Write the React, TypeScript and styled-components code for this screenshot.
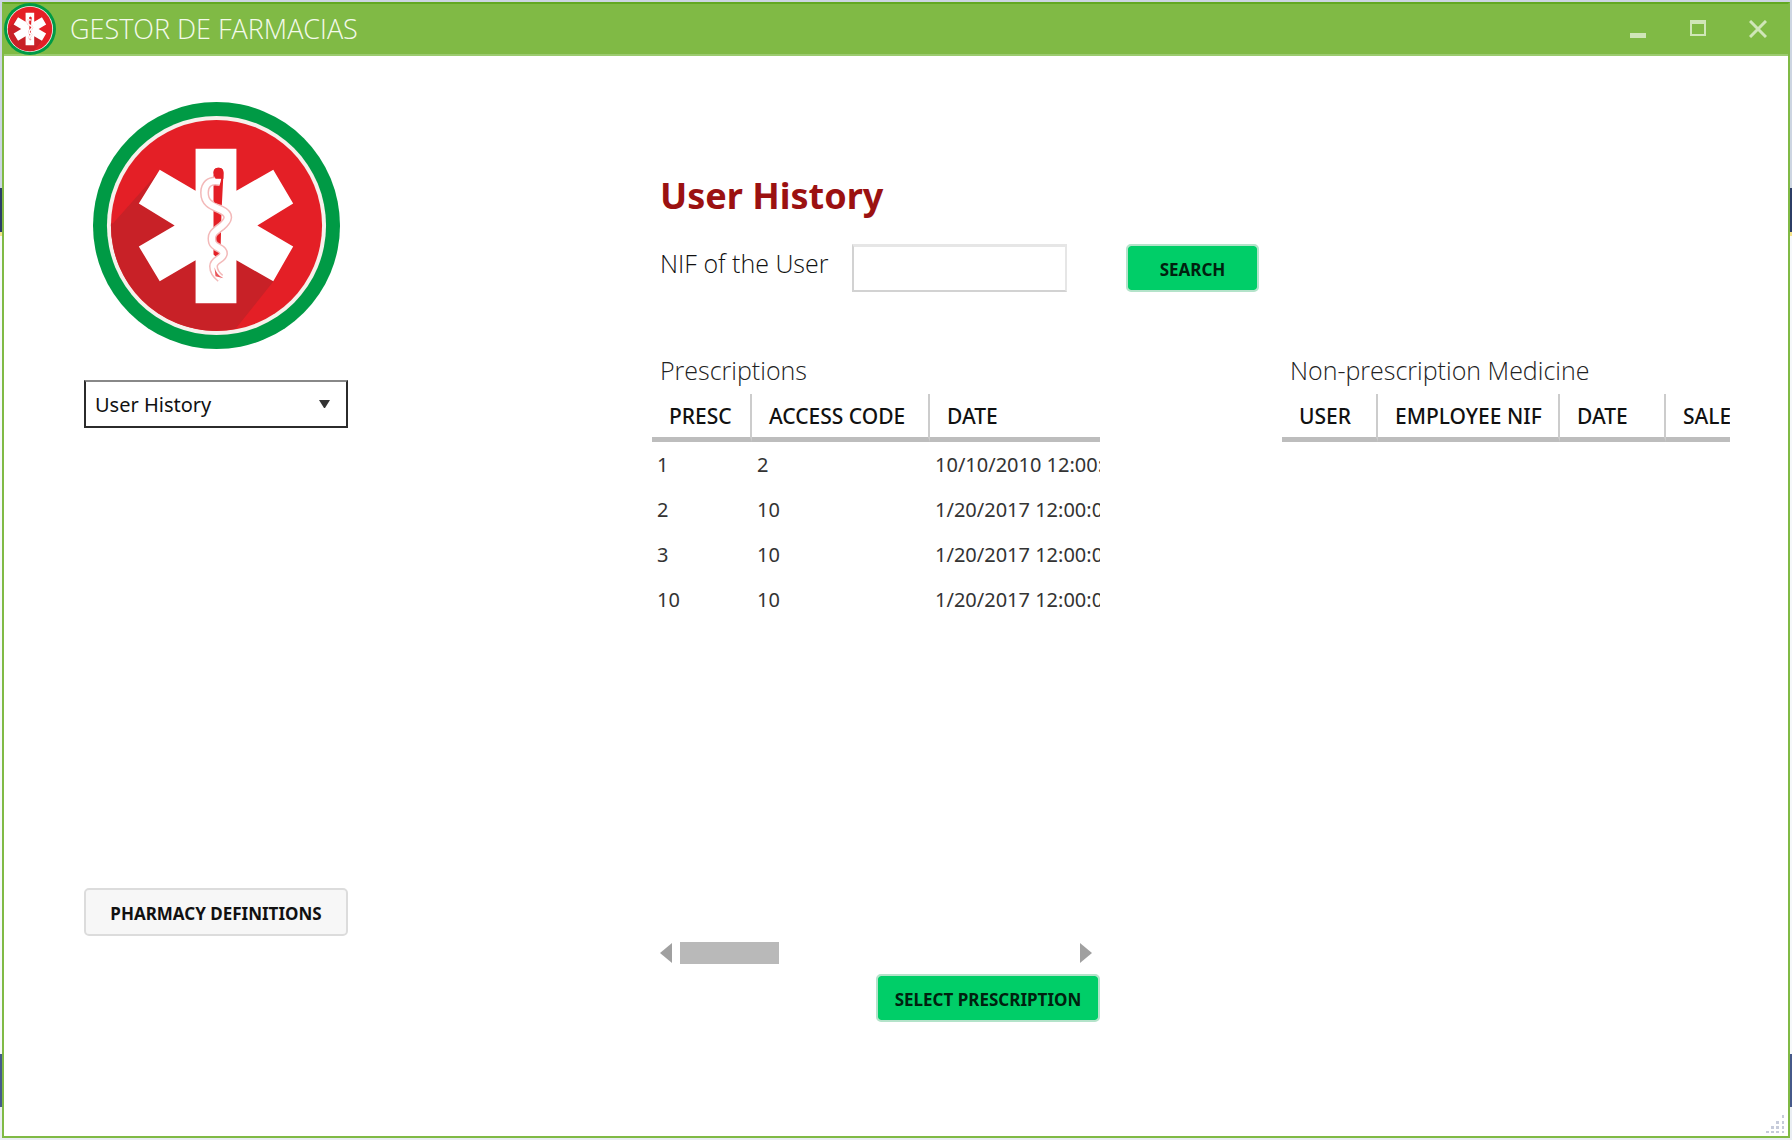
import React, { useState } from "react";
import styled, { createGlobalStyle } from "styled-components";

const GlobalStyle = createGlobalStyle`
  *, *::before, *::after { box-sizing: border-box; }
  body {
    margin: 0;
    background: #cdd5e2;
    font-family: "Noto Sans", "Open Sans", sans-serif;
    color: #111;
  }
  button, input, select { font: inherit; color: inherit; }
`;

const Desktop = styled.div`
  min-height: 100vh;
  padding: 2px;
  display: flex;
  background: linear-gradient(
    #cdd5e2 188px,
    #2c3d66 188px 232px,
    #f3e38c 232px 236px,
    #f6f8fb 236px 1054px,
    #46598a 1054px 1107px,
    #e9edf3 1107px
  );
`;

const AppWindow = styled.div`
  flex: 1;
  min-width: 0;
  display: flex;
  flex-direction: column;
  background: #fff;
  border: 2px solid #80ba45;
  border-top-color: #62a822;
  position: relative;
`;

const TitleBar = styled.header`
  height: 52px;
  flex: none;
  display: flex;
  align-items: center;
  gap: 14px;
  background: #80ba45;
  border-bottom: 2px solid #9ccb70;
  color: #f4faec;
`;

const Title = styled.h1`
  margin: 0;
  flex: 1;
  font: 300 27px/50px "Open Sans", "Noto Sans", sans-serif;
`;

const WindowControls = styled.div`
  display: flex;
`;

const ControlButton = styled.button`
  width: 60px;
  height: 50px;
  padding: 0;
  border: 0;
  background: none;
  color: #d0e6b8;
  display: grid;
  place-items: center;
`;

const Body = styled.div`
  flex: 1;
  display: grid;
  grid-template-columns: 264px minmax(0, 1fr);
  column-gap: 304px;
  padding: 46px 58px 110px 80px;
`;

const Sidebar = styled.aside`
  display: flex;
  flex-direction: column;
  align-items: center;
`;

const PageSelect = styled.div`
  position: relative;
  width: 100%;
  margin-top: 31px;
  select {
    display: block;
    width: 100%;
    height: 48px;
    padding: 0 9px;
    border: 2px solid #2b2b2b;
    border-top-color: #888;
    border-radius: 0;
    background: #fff;
    appearance: none;
    font-size: 20px;
  }
  svg {
    position: absolute;
    right: 18px;
    top: 20px;
    pointer-events: none;
  }
`;

const Button = styled.button<{ $tone: "primary" | "plain" }>`
  height: 48px;
  padding: 2px 14px 0;
  border-radius: 5px;
  border: 2px solid ${(p) => (p.$tone === "primary" ? "#b4e3ca" : "#dcdcdc")};
  background: ${(p) => (p.$tone === "primary" ? "#00ce68" : "#f7f7f7")};
  background-clip: padding-box;
  color: ${(p) => (p.$tone === "primary" ? "#00210f" : "#111")};
  font-size: 17px;
  font-weight: 700;
  white-space: nowrap;
`;

const SidebarButton = styled(Button)`
  width: 100%;
  margin-top: 460px;
`;

const Main = styled.main`
  display: flex;
  flex-direction: column;
  padding-top: 70px;
`;

const Heading = styled.h2`
  margin: 0 0 0 8px;
  font-size: 36px;
  line-height: 48px;
  font-weight: 700;
  color: #9b1111;
`;

const SearchForm = styled.form`
  display: flex;
  align-items: center;
  margin: 24px 0 0 8px;
  label {
    width: 192px;
    font: 300 25px/36px "Open Sans", "Noto Sans", sans-serif;
    padding-bottom: 10px;
    white-space: nowrap;
  }
  input {
    width: 215px;
    height: 48px;
    margin-right: 59px;
    padding: 0 8px;
    border: 2px solid #d2d2d2;
    border-top: 3px solid #e6e6e6;
    border-right-color: #e6e6e6;
    font-size: 20px;
  }
  button { width: 133px; }
`;

const Panels = styled.div`
  display: grid;
  grid-template-columns: repeat(2, minmax(0, 1fr));
  column-gap: 182px;
  margin-top: 60px;
`;

const Panel = styled.section`
  display: flex;
  flex-direction: column;
`;

const PanelTitle = styled.h3`
  margin: 0 0 6px 8px;
  font: 300 25px/36px "Open Sans", "Noto Sans", sans-serif;
  white-space: nowrap;
  color: #222;
`;

const TableViewport = styled.div`
  height: 548px;
  overflow: hidden;
`;

const Table = styled.table`
  table-layout: fixed;
  width: 700px;
  border-collapse: separate;
  border-spacing: 0;
  th {
    height: 48px;
    padding: 0 0 0 17px;
    border-right: 2px solid #cccccc;
    border-bottom: 5px solid #bdbdbd;
    text-align: left;
    font-size: 21px;
    line-height: 30px;
    font-weight: 500;
    white-space: nowrap;
  }
  td {
    height: 45px;
    padding: 0 0 0 5px;
    font-size: 20px;
    line-height: 30px;
    color: #333;
    white-space: nowrap;
  }
`;

const Scrollbar = styled.div`
  display: flex;
  align-items: center;
  height: 22px;
  padding: 0 8px;
`;

const Arrow = styled.button`
  width: 12px;
  height: 22px;
  padding: 0;
  border: 0;
  background: none;
  color: #a0a0a0;
  display: grid;
  place-items: center;
`;

const Track = styled.div`
  flex: 1;
  margin: 0 8px;
`;

const Thumb = styled.div`
  width: 99px;
  height: 22px;
  background: #b9b9b9;
`;

const PanelActions = styled.div`
  display: flex;
  justify-content: flex-end;
  margin-top: 10px;
  button { width: 224px; }
`;

const Grip = styled.svg`
  position: absolute;
  right: 2px;
  bottom: 2px;
`;

function Logo({ size }: { size: number }) {
  const snake =
    "M128 80C116 77 112 84 112 91C112 103 122 105 128 108C139 113 136 119 129 125C121 131 118 133 120 141C122 147 131 146 131 152C131 158 121 158 121 165C121 171 124 174 128 177";
  return (
    <svg width={size} height={size} viewBox="0 0 248 248" role="img" aria-label="Pharmacy logo">
      <circle cx="124" cy="124" r="124" fill="#009a45" />
      <circle cx="124" cy="124" r="110" fill="#f6f1ec" />
      <circle cx="124" cy="124" r="106" fill="#e41f26" />
      <path d="M20 122 L67 69 L182 179 L143 228 A106 106 0 0 1 18 122Z" fill="#c82127" />
      <path
        d="M103 47h41v42l37-21 20 34-36 22 36 21-20 35-37-21v43h-41v-43l-36 21-21-35 36-21-36-22 21-34 36 21z"
        fill="#fff"
      />
      <path d="M121 71q0-5 5-5t5 5l-2 40-1 42-4 3-3-3z" fill="#e41f26" />
      <path d={snake} fill="none" stroke="#f3b9b9" strokeWidth="9" />
      <path d={snake} fill="none" stroke="#fff" strokeWidth="6" />
      <path d="M121 71q0-5 5-5t5 5v6h-8zM122 86h7l-1 17-6-2z" fill="#e41f26" />
      <path d="M122 166q2 8 9 11l-8-2z" fill="#e9565a" />
    </svg>
  );
}

interface Column { label: string; width?: number }

function DataTable({ label, columns, rows }: { label: string; columns: Column[]; rows: string[][] }) {
  return (
    <TableViewport>
      <Table aria-label={label}>
        <colgroup>
          {columns.map((c) => <col key={c.label} style={{ width: c.width }} />)}
        </colgroup>
        <thead>
          <tr>{columns.map((c) => <th key={c.label} scope="col">{c.label}</th>)}</tr>
        </thead>
        <tbody>
          {rows.map((r) => (
            <tr key={r[0]}>{r.map((v, i) => <td key={i}>{v}</td>)}</tr>
          ))}
        </tbody>
      </Table>
    </TableViewport>
  );
}

const prescriptionColumns: Column[] = [
  { label: "PRESC", width: 100 },
  { label: "ACCESS CODE", width: 178 },
  { label: "DATE" },
];

const prescriptions = [
  ["1", "2", "10/10/2010 12:00:00 AM"],
  ["2", "10", "1/20/2017 12:00:00 AM"],
  ["3", "10", "1/20/2017 12:00:00 AM"],
  ["10", "10", "1/20/2017 12:00:00 AM"],
];

const medicineColumns: Column[] = [
  { label: "USER", width: 96 },
  { label: "EMPLOYEE NIF", width: 182 },
  { label: "DATE", width: 106 },
  { label: "SALE" },
];

export default function App() {
  const [nif, setNif] = useState("");
  return (
    <>
      <GlobalStyle />
      <Desktop>
        <AppWindow>
          <TitleBar>
            <Logo size={52} />
            <Title>GESTOR DE FARMACIAS</Title>
            <WindowControls>
              <ControlButton aria-label="Minimize">
                <svg width="18" height="18"><path d="M1 13h16v5H1z" fill="currentColor" /></svg>
              </ControlButton>
              <ControlButton aria-label="Maximize">
                <svg width="18" height="18">
                  <path d="M1 0h16v4H1z" fill="currentColor" />
                  <path d="M2 1v14h14V1" fill="none" stroke="currentColor" strokeWidth="2" />
                </svg>
              </ControlButton>
              <ControlButton aria-label="Close">
                <svg width="18" height="18"><path d="M1 1l16 16M17 1L1 17" stroke="currentColor" strokeWidth="3" /></svg>
              </ControlButton>
            </WindowControls>
          </TitleBar>
          <Body>
            <Sidebar>
              <Logo size={247} />
              <PageSelect>
                <select aria-label="Page" defaultValue="history">
                  <option value="history">User History</option>
                </select>
                <svg width="11" height="8"><path d="M0 0h11L6 8H5z" fill="#333" /></svg>
              </PageSelect>
              <SidebarButton $tone="plain">PHARMACY DEFINITIONS</SidebarButton>
            </Sidebar>
            <Main>
              <Heading>User History</Heading>
              <SearchForm onSubmit={(e) => e.preventDefault()}>
                <label htmlFor="nif">NIF of the User</label>
                <input id="nif" value={nif} onChange={(e) => setNif(e.target.value)} />
                <Button $tone="primary" type="submit">SEARCH</Button>
              </SearchForm>
              <Panels>
                <Panel>
                  <PanelTitle>Prescriptions</PanelTitle>
                  <DataTable label="Prescriptions" columns={prescriptionColumns} rows={prescriptions} />
                  <Scrollbar>
                    <Arrow aria-label="Scroll left">
                      <svg width="12" height="20"><path d="M12 0v20L0 10z" fill="currentColor" /></svg>
                    </Arrow>
                    <Track><Thumb /></Track>
                    <Arrow aria-label="Scroll right">
                      <svg width="12" height="20"><path d="M0 0v20l12-10z" fill="currentColor" /></svg>
                    </Arrow>
                  </Scrollbar>
                  <PanelActions>
                    <Button $tone="primary">SELECT PRESCRIPTION</Button>
                  </PanelActions>
                </Panel>
                <Panel>
                  <PanelTitle>Non-prescription Medicine</PanelTitle>
                  <DataTable label="Non-prescription Medicine" columns={medicineColumns} rows={[]} />
                </Panel>
              </Panels>
            </Main>
          </Body>
          <Grip width="20" height="20" aria-hidden="true">
            <path d="M16 1h2v3h-2zM10 7h3v3h-3zM16 7h2v3h-2zM5 12h3v3H5zM10 12h3v3h-3zM16 12h2v3h-2zM0 17h3v2H0zM5 17h3v2H5zM10 17h3v2h-3zM16 17h2v2h-2z" fill="#c6cbda" />
          </Grip>
        </AppWindow>
      </Desktop>
    </>
  );
}
